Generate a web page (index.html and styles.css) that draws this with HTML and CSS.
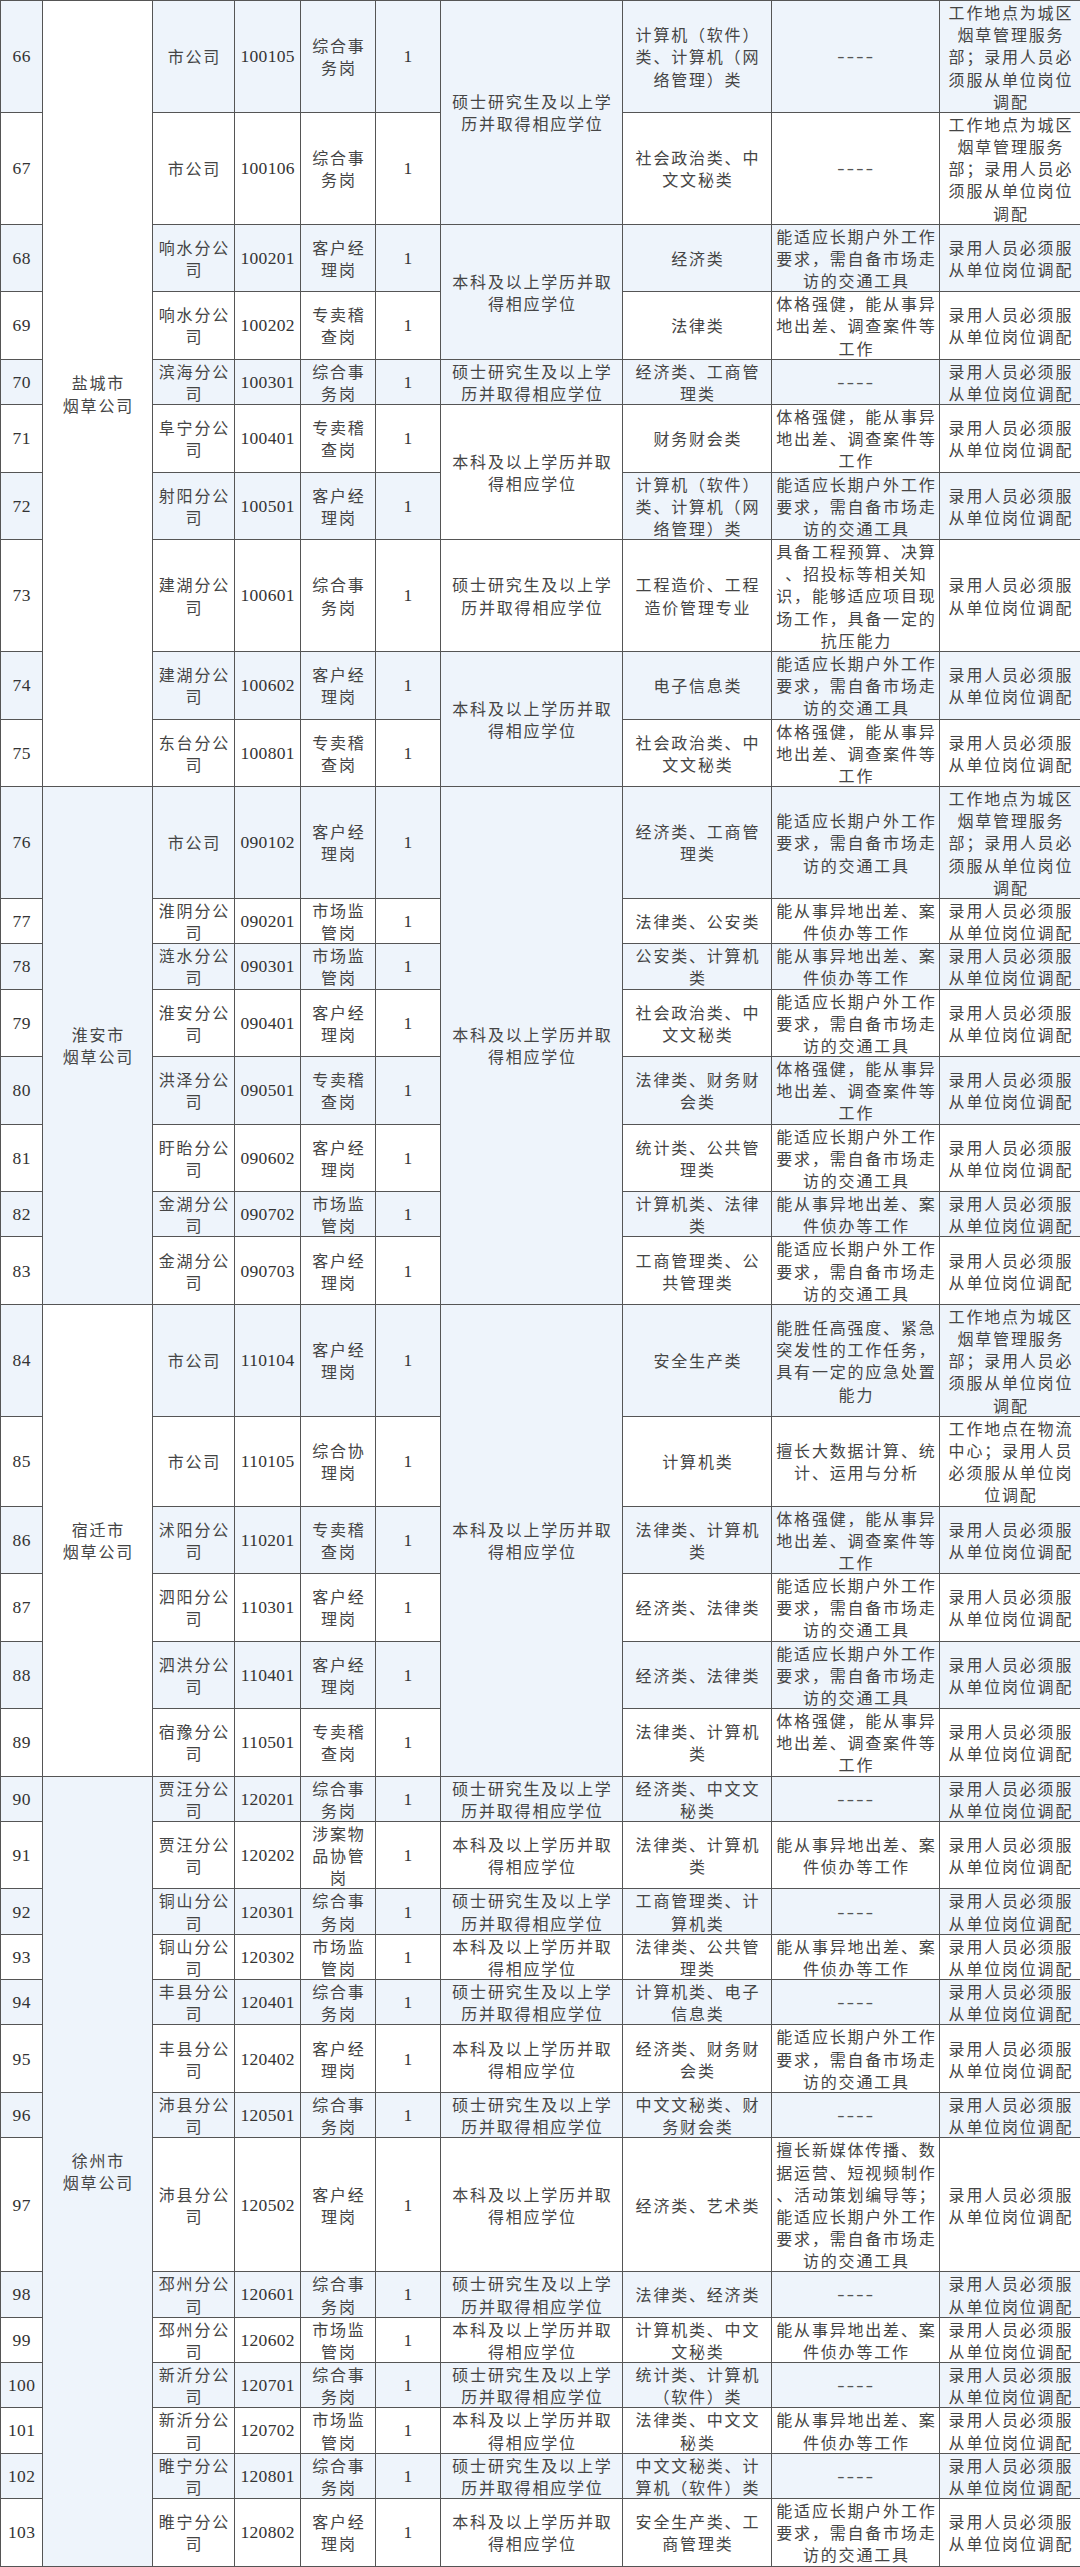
FILE: index.html
```html
<!DOCTYPE html>
<html lang="zh-CN">
<head>
<meta charset="utf-8">
<title>招聘岗位表</title>
<link rel="stylesheet" href="styles.css">
</head>
<body>
<table class="jobs">
<colgroup>
<col class="c1"><col class="c2"><col class="c3"><col class="c4"><col class="c5"><col class="c6"><col class="c7"><col class="c8"><col class="c9"><col class="c10">
</colgroup>
<tbody>
<tr class="b">
<td class="n">66</td><td rowspan="10" class="w">盐城市<br>烟草公司</td><td>市公司</td><td class="n">100105</td><td>综合事<br>务岗</td><td class="n">1</td><td rowspan="2">硕士研究生及以上学<br>历并取得相应学位</td><td>计算机（软件）<br>类、计算机（网<br>络管理）类</td><td><span class="dash">----</span></td><td class="x">工作地点为城区<br>烟草管理服务<br>部；录用人员必<br>须服从单位岗位<br>调配</td>
</tr>
<tr>
<td class="n">67</td><td>市公司</td><td class="n">100106</td><td>综合事<br>务岗</td><td class="n">1</td><td>社会政治类、中<br>文文秘类</td><td><span class="dash">----</span></td><td class="x">工作地点为城区<br>烟草管理服务<br>部；录用人员必<br>须服从单位岗位<br>调配</td>
</tr>
<tr class="b">
<td class="n">68</td><td>响水分公<br>司</td><td class="n">100201</td><td>客户经<br>理岗</td><td class="n">1</td><td rowspan="2">本科及以上学历并取<br>得相应学位</td><td>经济类</td><td>能适应长期户外工作<br>要求，需自备市场走<br>访的交通工具</td><td class="x">录用人员必须服<br>从单位岗位调配</td>
</tr>
<tr>
<td class="n">69</td><td>响水分公<br>司</td><td class="n">100202</td><td>专卖稽<br>查岗</td><td class="n">1</td><td>法律类</td><td>体格强健，能从事异<br>地出差、调查案件等<br>工作</td><td class="x">录用人员必须服<br>从单位岗位调配</td>
</tr>
<tr class="b">
<td class="n">70</td><td>滨海分公<br>司</td><td class="n">100301</td><td>综合事<br>务岗</td><td class="n">1</td><td>硕士研究生及以上学<br>历并取得相应学位</td><td>经济类、工商管<br>理类</td><td><span class="dash">----</span></td><td class="x">录用人员必须服<br>从单位岗位调配</td>
</tr>
<tr>
<td class="n">71</td><td>阜宁分公<br>司</td><td class="n">100401</td><td>专卖稽<br>查岗</td><td class="n">1</td><td rowspan="2">本科及以上学历并取<br>得相应学位</td><td>财务财会类</td><td>体格强健，能从事异<br>地出差、调查案件等<br>工作</td><td class="x">录用人员必须服<br>从单位岗位调配</td>
</tr>
<tr class="b">
<td class="n">72</td><td>射阳分公<br>司</td><td class="n">100501</td><td>客户经<br>理岗</td><td class="n">1</td><td>计算机（软件）<br>类、计算机（网<br>络管理）类</td><td>能适应长期户外工作<br>要求，需自备市场走<br>访的交通工具</td><td class="x">录用人员必须服<br>从单位岗位调配</td>
</tr>
<tr>
<td class="n">73</td><td>建湖分公<br>司</td><td class="n">100601</td><td>综合事<br>务岗</td><td class="n">1</td><td>硕士研究生及以上学<br>历并取得相应学位</td><td>工程造价、工程<br>造价管理专业</td><td>具备工程预算、决算<br>、招投标等相关知<br>识，能够适应项目现<br>场工作，具备一定的<br>抗压能力</td><td class="x">录用人员必须服<br>从单位岗位调配</td>
</tr>
<tr class="b">
<td class="n">74</td><td>建湖分公<br>司</td><td class="n">100602</td><td>客户经<br>理岗</td><td class="n">1</td><td rowspan="2">本科及以上学历并取<br>得相应学位</td><td>电子信息类</td><td>能适应长期户外工作<br>要求，需自备市场走<br>访的交通工具</td><td class="x">录用人员必须服<br>从单位岗位调配</td>
</tr>
<tr>
<td class="n">75</td><td>东台分公<br>司</td><td class="n">100801</td><td>专卖稽<br>查岗</td><td class="n">1</td><td>社会政治类、中<br>文文秘类</td><td>体格强健，能从事异<br>地出差、调查案件等<br>工作</td><td class="x">录用人员必须服<br>从单位岗位调配</td>
</tr>
<tr class="b">
<td class="n">76</td><td rowspan="8" class="bl">淮安市<br>烟草公司</td><td>市公司</td><td class="n">090102</td><td>客户经<br>理岗</td><td class="n">1</td><td rowspan="8">本科及以上学历并取<br>得相应学位</td><td>经济类、工商管<br>理类</td><td>能适应长期户外工作<br>要求，需自备市场走<br>访的交通工具</td><td class="x">工作地点为城区<br>烟草管理服务<br>部；录用人员必<br>须服从单位岗位<br>调配</td>
</tr>
<tr>
<td class="n">77</td><td>淮阴分公<br>司</td><td class="n">090201</td><td>市场监<br>管岗</td><td class="n">1</td><td>法律类、公安类</td><td>能从事异地出差、案<br>件侦办等工作</td><td class="x">录用人员必须服<br>从单位岗位调配</td>
</tr>
<tr class="b">
<td class="n">78</td><td>涟水分公<br>司</td><td class="n">090301</td><td>市场监<br>管岗</td><td class="n">1</td><td>公安类、计算机<br>类</td><td>能从事异地出差、案<br>件侦办等工作</td><td class="x">录用人员必须服<br>从单位岗位调配</td>
</tr>
<tr>
<td class="n">79</td><td>淮安分公<br>司</td><td class="n">090401</td><td>客户经<br>理岗</td><td class="n">1</td><td>社会政治类、中<br>文文秘类</td><td>能适应长期户外工作<br>要求，需自备市场走<br>访的交通工具</td><td class="x">录用人员必须服<br>从单位岗位调配</td>
</tr>
<tr class="b">
<td class="n">80</td><td>洪泽分公<br>司</td><td class="n">090501</td><td>专卖稽<br>查岗</td><td class="n">1</td><td>法律类、财务财<br>会类</td><td>体格强健，能从事异<br>地出差、调查案件等<br>工作</td><td class="x">录用人员必须服<br>从单位岗位调配</td>
</tr>
<tr>
<td class="n">81</td><td>盱眙分公<br>司</td><td class="n">090602</td><td>客户经<br>理岗</td><td class="n">1</td><td>统计类、公共管<br>理类</td><td>能适应长期户外工作<br>要求，需自备市场走<br>访的交通工具</td><td class="x">录用人员必须服<br>从单位岗位调配</td>
</tr>
<tr class="b">
<td class="n">82</td><td>金湖分公<br>司</td><td class="n">090702</td><td>市场监<br>管岗</td><td class="n">1</td><td>计算机类、法律<br>类</td><td>能从事异地出差、案<br>件侦办等工作</td><td class="x">录用人员必须服<br>从单位岗位调配</td>
</tr>
<tr>
<td class="n">83</td><td>金湖分公<br>司</td><td class="n">090703</td><td>客户经<br>理岗</td><td class="n">1</td><td>工商管理类、公<br>共管理类</td><td>能适应长期户外工作<br>要求，需自备市场走<br>访的交通工具</td><td class="x">录用人员必须服<br>从单位岗位调配</td>
</tr>
<tr class="b">
<td class="n">84</td><td rowspan="6" class="w">宿迁市<br>烟草公司</td><td>市公司</td><td class="n">110104</td><td>客户经<br>理岗</td><td class="n">1</td><td rowspan="6">本科及以上学历并取<br>得相应学位</td><td>安全生产类</td><td>能胜任高强度、紧急<br>突发性的工作任务，<br>具有一定的应急处置<br>能力</td><td class="x">工作地点为城区<br>烟草管理服务<br>部；录用人员必<br>须服从单位岗位<br>调配</td>
</tr>
<tr>
<td class="n">85</td><td>市公司</td><td class="n">110105</td><td>综合协<br>理岗</td><td class="n">1</td><td>计算机类</td><td>擅长大数据计算、统<br>计、运用与分析</td><td class="x">工作地点在物流<br>中心；录用人员<br>必须服从单位岗<br>位调配</td>
</tr>
<tr class="b">
<td class="n">86</td><td>沭阳分公<br>司</td><td class="n">110201</td><td>专卖稽<br>查岗</td><td class="n">1</td><td>法律类、计算机<br>类</td><td>体格强健，能从事异<br>地出差、调查案件等<br>工作</td><td class="x">录用人员必须服<br>从单位岗位调配</td>
</tr>
<tr>
<td class="n">87</td><td>泗阳分公<br>司</td><td class="n">110301</td><td>客户经<br>理岗</td><td class="n">1</td><td>经济类、法律类</td><td>能适应长期户外工作<br>要求，需自备市场走<br>访的交通工具</td><td class="x">录用人员必须服<br>从单位岗位调配</td>
</tr>
<tr class="b">
<td class="n">88</td><td>泗洪分公<br>司</td><td class="n">110401</td><td>客户经<br>理岗</td><td class="n">1</td><td>经济类、法律类</td><td>能适应长期户外工作<br>要求，需自备市场走<br>访的交通工具</td><td class="x">录用人员必须服<br>从单位岗位调配</td>
</tr>
<tr>
<td class="n">89</td><td>宿豫分公<br>司</td><td class="n">110501</td><td>专卖稽<br>查岗</td><td class="n">1</td><td>法律类、计算机<br>类</td><td>体格强健，能从事异<br>地出差、调查案件等<br>工作</td><td class="x">录用人员必须服<br>从单位岗位调配</td>
</tr>
<tr class="b">
<td class="n">90</td><td rowspan="14" class="bl">徐州市<br>烟草公司</td><td>贾汪分公<br>司</td><td class="n">120201</td><td>综合事<br>务岗</td><td class="n">1</td><td>硕士研究生及以上学<br>历并取得相应学位</td><td>经济类、中文文<br>秘类</td><td><span class="dash">----</span></td><td class="x">录用人员必须服<br>从单位岗位调配</td>
</tr>
<tr>
<td class="n">91</td><td>贾汪分公<br>司</td><td class="n">120202</td><td>涉案物<br>品协管<br>岗</td><td class="n">1</td><td>本科及以上学历并取<br>得相应学位</td><td>法律类、计算机<br>类</td><td>能从事异地出差、案<br>件侦办等工作</td><td class="x">录用人员必须服<br>从单位岗位调配</td>
</tr>
<tr class="b">
<td class="n">92</td><td>铜山分公<br>司</td><td class="n">120301</td><td>综合事<br>务岗</td><td class="n">1</td><td>硕士研究生及以上学<br>历并取得相应学位</td><td>工商管理类、计<br>算机类</td><td><span class="dash">----</span></td><td class="x">录用人员必须服<br>从单位岗位调配</td>
</tr>
<tr>
<td class="n">93</td><td>铜山分公<br>司</td><td class="n">120302</td><td>市场监<br>管岗</td><td class="n">1</td><td>本科及以上学历并取<br>得相应学位</td><td>法律类、公共管<br>理类</td><td>能从事异地出差、案<br>件侦办等工作</td><td class="x">录用人员必须服<br>从单位岗位调配</td>
</tr>
<tr class="b">
<td class="n">94</td><td>丰县分公<br>司</td><td class="n">120401</td><td>综合事<br>务岗</td><td class="n">1</td><td>硕士研究生及以上学<br>历并取得相应学位</td><td>计算机类、电子<br>信息类</td><td><span class="dash">----</span></td><td class="x">录用人员必须服<br>从单位岗位调配</td>
</tr>
<tr>
<td class="n">95</td><td>丰县分公<br>司</td><td class="n">120402</td><td>客户经<br>理岗</td><td class="n">1</td><td>本科及以上学历并取<br>得相应学位</td><td>经济类、财务财<br>会类</td><td>能适应长期户外工作<br>要求，需自备市场走<br>访的交通工具</td><td class="x">录用人员必须服<br>从单位岗位调配</td>
</tr>
<tr class="b">
<td class="n">96</td><td>沛县分公<br>司</td><td class="n">120501</td><td>综合事<br>务岗</td><td class="n">1</td><td>硕士研究生及以上学<br>历并取得相应学位</td><td>中文文秘类、财<br>务财会类</td><td><span class="dash">----</span></td><td class="x">录用人员必须服<br>从单位岗位调配</td>
</tr>
<tr>
<td class="n">97</td><td>沛县分公<br>司</td><td class="n">120502</td><td>客户经<br>理岗</td><td class="n">1</td><td>本科及以上学历并取<br>得相应学位</td><td>经济类、艺术类</td><td>擅长新媒体传播、数<br>据运营、短视频制作<br>、活动策划编导等；<br>能适应长期户外工作<br>要求，需自备市场走<br>访的交通工具</td><td class="x">录用人员必须服<br>从单位岗位调配</td>
</tr>
<tr class="b">
<td class="n">98</td><td>邳州分公<br>司</td><td class="n">120601</td><td>综合事<br>务岗</td><td class="n">1</td><td>硕士研究生及以上学<br>历并取得相应学位</td><td>法律类、经济类</td><td><span class="dash">----</span></td><td class="x">录用人员必须服<br>从单位岗位调配</td>
</tr>
<tr>
<td class="n">99</td><td>邳州分公<br>司</td><td class="n">120602</td><td>市场监<br>管岗</td><td class="n">1</td><td>本科及以上学历并取<br>得相应学位</td><td>计算机类、中文<br>文秘类</td><td>能从事异地出差、案<br>件侦办等工作</td><td class="x">录用人员必须服<br>从单位岗位调配</td>
</tr>
<tr class="b">
<td class="n">100</td><td>新沂分公<br>司</td><td class="n">120701</td><td>综合事<br>务岗</td><td class="n">1</td><td>硕士研究生及以上学<br>历并取得相应学位</td><td>统计类、计算机<br>（软件）类</td><td><span class="dash">----</span></td><td class="x">录用人员必须服<br>从单位岗位调配</td>
</tr>
<tr>
<td class="n">101</td><td>新沂分公<br>司</td><td class="n">120702</td><td>市场监<br>管岗</td><td class="n">1</td><td>本科及以上学历并取<br>得相应学位</td><td>法律类、中文文<br>秘类</td><td>能从事异地出差、案<br>件侦办等工作</td><td class="x">录用人员必须服<br>从单位岗位调配</td>
</tr>
<tr class="b">
<td class="n">102</td><td>睢宁分公<br>司</td><td class="n">120801</td><td>综合事<br>务岗</td><td class="n">1</td><td>硕士研究生及以上学<br>历并取得相应学位</td><td>中文文秘类、计<br>算机（软件）类</td><td><span class="dash">----</span></td><td class="x">录用人员必须服<br>从单位岗位调配</td>
</tr>
<tr>
<td class="n">103</td><td>睢宁分公<br>司</td><td class="n">120802</td><td>客户经<br>理岗</td><td class="n">1</td><td>本科及以上学历并取<br>得相应学位</td><td>安全生产类、工<br>商管理类</td><td>能适应长期户外工作<br>要求，需自备市场走<br>访的交通工具</td><td class="x">录用人员必须服<br>从单位岗位调配</td>
</tr>
</tbody>
</table>
</body>
</html>
```

FILE: styles.css
```css
html, body {
  margin: 0;
  padding: 0;
  background: #ffffff;
}

.jobs {
  border-collapse: collapse;
  table-layout: fixed;
  width: 1080px;
}

.c1 { width: 42px; }
.c2 { width: 110px; }
.c3 { width: 82px; }
.c4 { width: 66px; }
.c5 { width: 75px; }
.c6 { width: 65px; }
.c7 { width: 182px; }
.c8 { width: 149px; }
.c9 { width: 168px; }
.c10 { width: 141px; }

.jobs td {
  border: 1px solid #555555;
  padding: 0 0 0 1.8px;
  text-align: center;
  vertical-align: middle;
  white-space: nowrap;
  overflow: hidden;
  font-family: "Noto Sans CJK SC", sans-serif;
  font-size: 16px;
  letter-spacing: 1.8px;
  line-height: 22.17px;
  color: #454545;
  background: #ffffff;
}

.jobs td.x {
  border-left-color: #8c8c8c;
}

.jobs tr.b td {
  background: #eef4fb;
}

.jobs td.n {
  font-family: "Liberation Serif", serif;
  font-size: 17.5px;
  letter-spacing: 0.3px;
  padding-left: 0.3px;
  color: #333333;
}

.jobs tr td.w {
  background: #ffffff;
}

.jobs tr td.bl {
  background: #eef4fb;
}

.dash {
  display: inline-block;
  font-family: "Liberation Sans", sans-serif;
  letter-spacing: 1.2px;
  transform: scaleX(1.45);
  color: #555555;
}
```
